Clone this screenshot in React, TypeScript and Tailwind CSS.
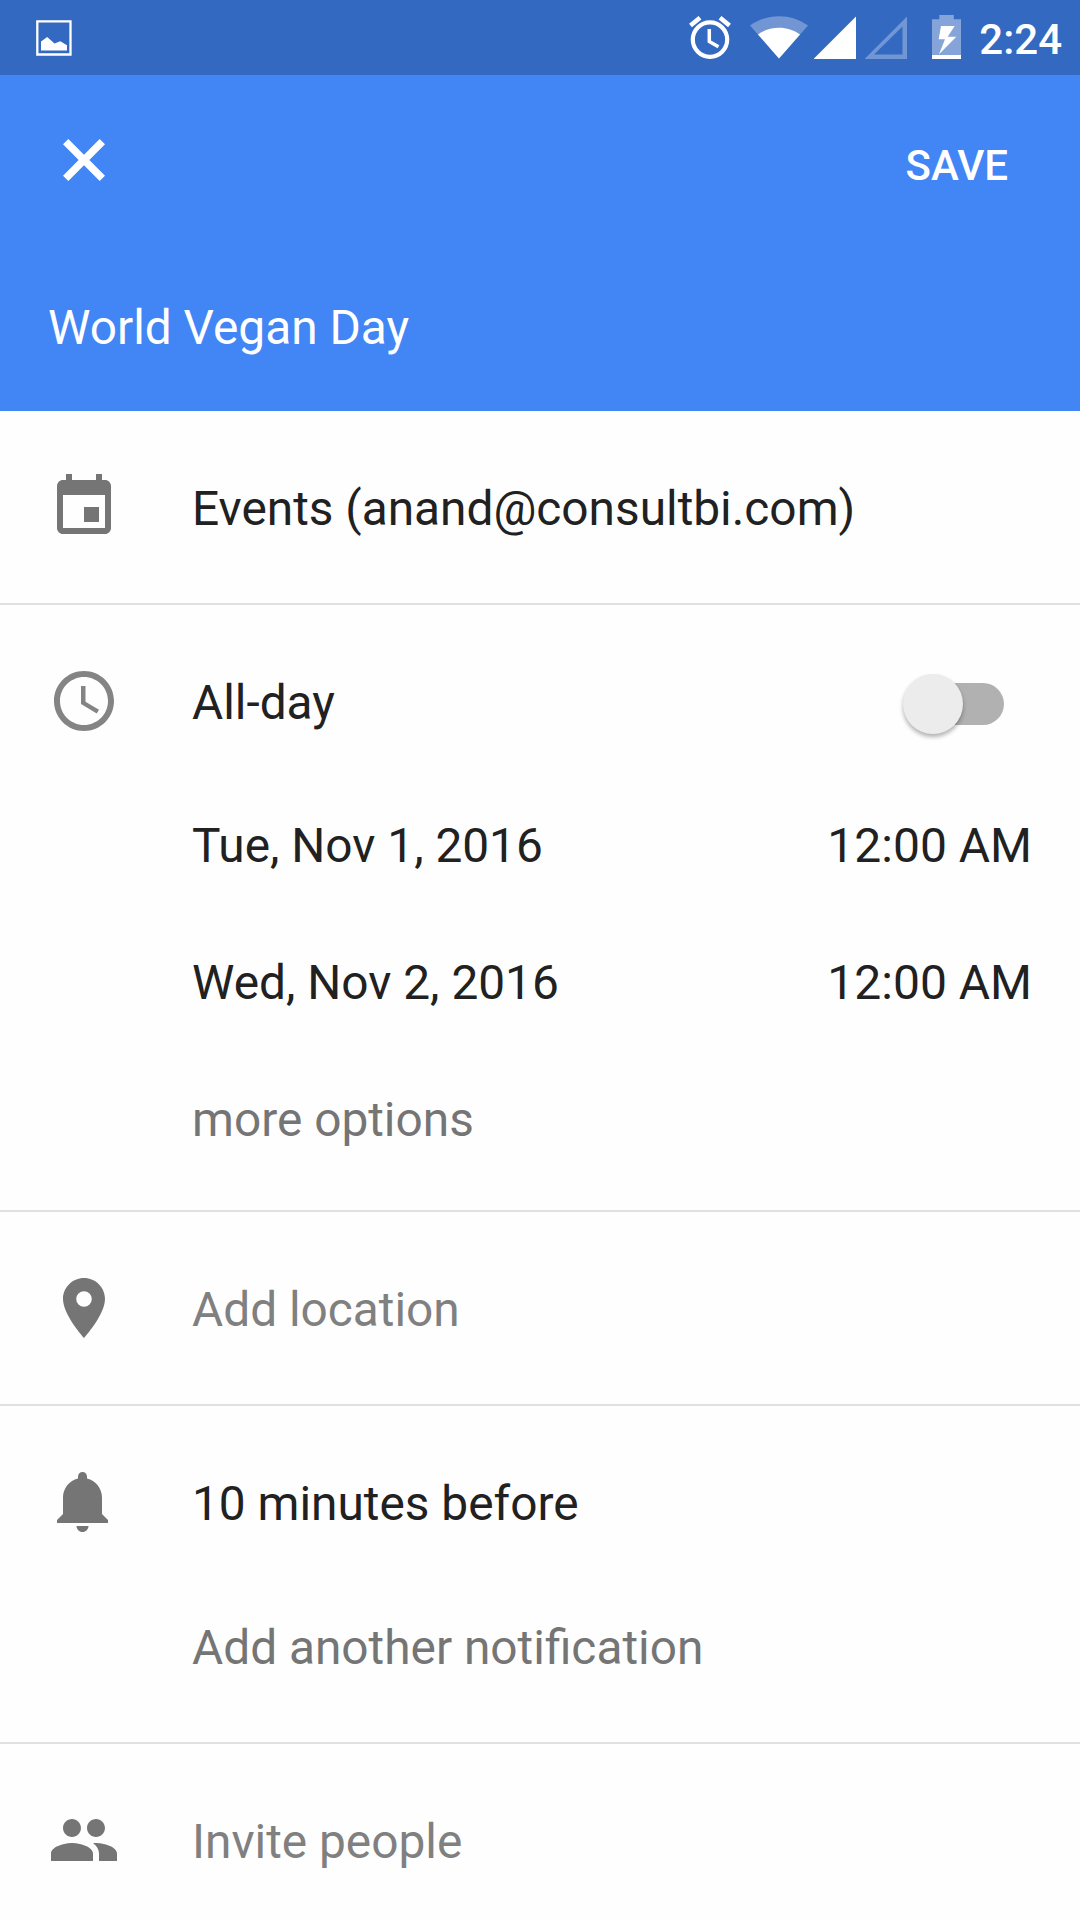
import type { ReactNode } from "react";

function Icon({ d, className }: { d: string; className: string }) {
  return (
    <svg viewBox="0 0 24 24" className={"size-[72px] shrink-0 " + className} fill="currentColor" fillRule="evenodd">
      <path d={d} />
    </svg>
  );
}

const icons = {
  close: "M19 6.780L17.220 5 12 10.220 6.780 5 5 6.780 10.220 12 5 17.220 6.780 19 12 13.780 17.220 19 19 17.220 13.780 12z",
  event: "M17 12h-5v5h5v-5zM16 1v2H8V1H6v2H5c-1.11 0-1.99.9-1.99 2L3 19c0 1.1.89 2 2 2h14c1.1 0 2-.9 2-2V5c0-1.1-.9-2-2-2h-1V1h-2zm3 18H5V8h14v11z",
  clock: "M11.99 2C6.47 2 2 6.48 2 12s4.47 10 9.99 10C17.52 22 22 17.52 22 12S17.52 2 11.99 2zM12 20c-4.42 0-8-3.58-8-8s3.58-8 8-8 8 3.58 8 8-3.58 8-8 8zM12.5 7H11v6l5.25 3.15.75-1.23-4.5-2.67z",
  place: "M12 2C8.13 2 5 5.13 5 9c0 5.25 7 13 7 13s7-7.75 7-13c0-3.87-3.13-7-7-7zm0 9.6a2.6 2.6 0 1 1 0-5.2 2.6 2.6 0 0 1 0 5.2z",
  bell: "M11.5 22c1.1 0 2-.9 2-2h-4c0 1.1.9 2 2 2zm6.5-6v-5.5c0-3.07-2.13-5.64-5-6.32V3.5c0-.83-.67-1.5-1.5-1.5S10 2.67 10 3.5v.68c-2.87.68-5 3.25-5 6.32V16l-2 2v1h17v-1l-2-2z",
  people: "M16 11c1.66 0 2.99-1.34 2.99-3S17.66 5 16 5s-3 1.34-3 3 1.34 3 3 3zm-8 0c1.66 0 2.99-1.34 2.99-3S9.66 5 8 5 5 6.34 5 8s1.34 3 3 3zm0 2c-2.33 0-7 1.17-7 3.5V19h14v-2.5c0-2.33-4.67-3.5-7-3.5zm8 0c-.29 0-.62.02-.97.05 1.16.84 1.97 1.97 1.97 3.45V19h6v-2.5c0-2.33-4.67-3.5-7-3.5z",
};

function StatusBar() {
  return (
    <div className="flex h-[75px] items-center justify-between bg-[#3469c1] pl-9 pr-[18px] text-white">
      <svg viewBox="0 0 36 37" className="h-[37px] w-9" fill="none">
        <path d="M1.300 2.300h33.200v33.200h-33.200z" stroke="currentColor" strokeWidth="2.300" />
        <path d="M5 22.500L11.200 18l7.300 6.500L24.300 22.300l6.700 4v5.200H5z" fill="currentColor" />
      </svg>
      <div className="flex items-center">
        <svg viewBox="0 0 42 43" className="mr-[19px] h-[43px] w-[42px]" fill="none" stroke="currentColor">
          <circle cx="21" cy="23.600" r="17.200" strokeWidth="4.200" />
          <path d="M20.300 13v12.500l9.200 5.300" strokeWidth="3.500" />
          <path d="M1.500 9.500L11 1.700M40.500 9.500L31 1.700" strokeWidth="4.500" />
        </svg>
        <svg viewBox="0 0 58 43" className="mr-1.5 h-[43px] w-[58px]" fill="currentColor">
          <path d="M0 9.500C17-3 41-3 58 9.500L29 42.500z" opacity=".3" />
          <path d="M8 18.500C20 9.500 38 9.500 50 18.500L29 42.500z" />
        </svg>
        <svg viewBox="0 0 42 43" className="mr-[9px] h-[43px] w-[42px]" fill="currentColor">
          <path d="M42 .5V43H-.5z" />
        </svg>
        <svg viewBox="0 0 42 43" className="mr-[25px] h-[43px] w-[42px]" fill="currentColor" fillRule="evenodd">
          <path d="M42 .5V43H-.5zM37.500 10.500L9 38.500h28.500z" opacity=".3" />
        </svg>
        <svg viewBox="0 0 29 45" className="mr-[18px] h-[45px] w-[29px]" fill="currentColor">
          <path d="M0 4.300h7.300V0h14.500v4.300H29V40H0z" opacity=".4" />
          <path d="M0 40h29v4H0zM9 11h13.700L15.700 21.700h8.600L7 39.300 13 24.300H6.700z" />
        </svg>
        <span className="mt-1 text-[42px] font-medium leading-[48px]">2:24</span>
      </div>
    </div>
  );
}

function Label({ children, className = "text-[#212121]" }: { children: ReactNode; className?: string }) {
  return <span className={"text-[47.8px]/[64px] " + className}>{children}</span>;
}

function DateRow({ date, time }: { date: string; time: string }) {
  return (
    <div className="flex h-[137px] items-center justify-between pl-36">
      <Label>{date}</Label>
      <span className="text-5xl/[64px] text-[#212121]">{time}</span>
    </div>
  );
}

function Toggle() {
  return (
    <div className="mr-[28px] mt-px flex h-[42px] w-[98px] items-center rounded-full bg-[#b1b1b1]">
      <div className="-ml-[3px] size-[60px] shrink-0 rounded-full bg-[#ececec] shadow-[0_3px_4px_rgba(0,0,0,0.3)]" />
    </div>
  );
}

export default function App() {
  return (
    <div className="h-[1920px] w-[1080px] overflow-hidden bg-[#fefefe] font-[Roboto,sans-serif]">
      <StatusBar />
      <header className="h-[336px] bg-[#4285f5] pl-12 pr-[72px] text-white">
        <div className="flex h-[172px] items-center justify-between">
          <Icon d={icons.close} className="-mt-0.5" />
          <span className="mt-2.5 text-[42px] font-medium leading-[48px]">SAVE</span>
        </div>
        <h1 className="mt-[49px] text-[47.8px]/[64px]">World Vegan Day</h1>
      </header>

      <section className="flex h-[194px] items-center gap-[72px] border-b-2 border-[#e0e0e0] px-12">
        <Icon d={icons.event} className="text-[#757575]" />
        <Label className="mt-1 text-[#212121]">Events (anand@consultbi.com)</Label>
      </section>

      <section className="h-[607px] border-b-2 border-[#e0e0e0] px-12">
        <div className="flex h-[172px] items-center gap-[72px] pt-5">
          <Icon d={icons.clock} className="text-[#848484]" />
          <div className="mt-1 flex flex-1 items-center justify-between">
            <Label>All-day</Label>
            <Toggle />
          </div>
        </div>
        <DateRow date="Tue, Nov 1, 2016" time="12:00 AM" />
        <DateRow date="Wed, Nov 2, 2016" time="12:00 AM" />
        <div className="flex h-[137px] items-center pl-36">
          <Label className="text-[#757575]">more options</Label>
        </div>
      </section>

      <section className="flex h-[194px] items-center gap-[72px] border-b-2 border-[#e0e0e0] px-12">
        <Icon d={icons.place} className="text-[#757575]" />
        <Label className="mt-1 text-[#808080]">Add location</Label>
      </section>

      <section className="h-[338px] border-b-2 border-[#e0e0e0] px-12">
        <div className="flex h-[192px] items-center gap-[72px]">
          <Icon d={icons.bell} className="text-[#757575]" />
          <Label className="mt-1 text-[#212121]">10 minutes before</Label>
        </div>
        <div className="flex h-[100px] items-center pl-36">
          <Label className="text-[#757575]">Add another notification</Label>
        </div>
      </section>

      <section className="flex h-[192px] items-center gap-[72px] px-12">
        <Icon d={icons.people} className="text-[#757575]" />
        <Label className="mt-1 text-[#808080]">Invite people</Label>
      </section>
    </div>
  );
}
